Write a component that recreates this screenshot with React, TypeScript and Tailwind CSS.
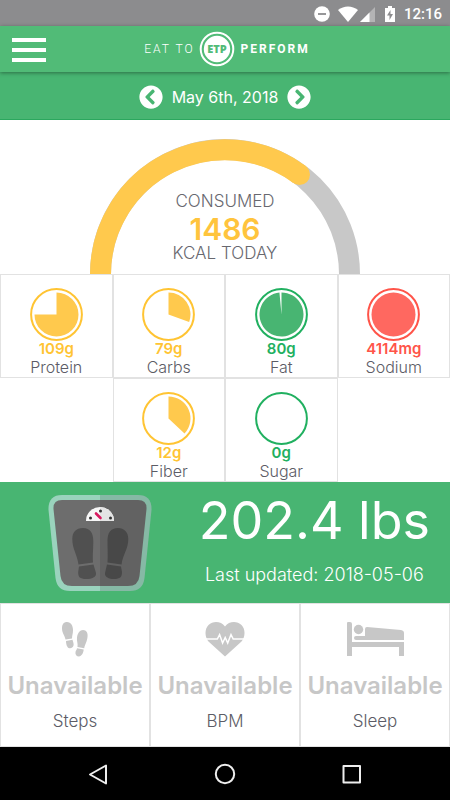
import React from "react"
import { FaChevronCircleLeft, FaChevronCircleRight } from "react-icons/fa"

interface Nutrient {
	name: string
	amount: string
	ratio: number
	fill: string
	textClass: string
}

const YELLOW = "#ffc94d"
const GREEN = "#48b572"
const RED = "#ff6860"

const topNutrients: Nutrient[] = [
	{ name: "Protein", amount: "109g", ratio: 0.75, fill: YELLOW, textClass: "text-[#ffc433]" },
	{ name: "Carbs", amount: "79g", ratio: 0.306, fill: YELLOW, textClass: "text-[#ffc433]" },
	{ name: "Fat", amount: "80g", ratio: 0.985, fill: GREEN, textClass: "text-[#21b060]" },
	{ name: "Sodium", amount: "4114mg", ratio: 1, fill: RED, textClass: "text-[#ff5449]" },
]

const bottomNutrients: Nutrient[] = [
	{ name: "Fiber", amount: "12g", ratio: 0.37, fill: YELLOW, textClass: "text-[#ffc433]" },
	{ name: "Sugar", amount: "0g", ratio: 0, fill: GREEN, textClass: "text-[#21b060]" },
]

const Pie = ({ ratio, fill }: { ratio: number; fill: string }) => {
	const angle = ratio * Math.PI * 2
	const x = 27 + 22 * Math.sin(angle)
	const y = 27 - 22 * Math.cos(angle)

	return (
		<svg className="h-[53px] w-[53px]" viewBox="0.5 0.5 53 53" aria-hidden="true">
			<circle cx="27" cy="27" r="25.4" fill="none" stroke="currentColor" strokeWidth="2" />
			{ratio >= 1 && <circle cx="27" cy="27" r="22" fill={fill} />}
			{ratio > 0 && ratio < 1 && <path d={`M27 27V5A22 22 0 ${ratio > 0.5 ? 1 : 0} 1 ${x} ${y}Z`} fill={fill} />}
		</svg>
	)
}

const NutrientCell = ({ nutrient }: { nutrient: Nutrient }) => (
	<div className="w-1/4 border border-[#e2e2e2] bg-white pt-[13px] flex flex-col items-center">
		<div className={`flex flex-col items-center ${nutrient.textClass}`}>
			<Pie ratio={nutrient.ratio} fill={nutrient.fill} />
			<span className="text-[15px] leading-4 font-semibold">{nutrient.amount}</span>
		</div>
		<span className="text-[16px] leading-5 font-light text-[#5c5c66]">{nutrient.name}</span>
	</div>
)

const StatusBar = () => (
	<div className="h-[26px] bg-[#8c8c8e] pt-0.5 pr-2 text-white flex items-center justify-end gap-2">
		<svg className="h-4 w-4" viewBox="0 0 16 16" aria-hidden="true">
			<circle cx="8" cy="8" r="7.8" fill="currentColor" />
			<path d="M4 8h8" stroke="#8c8c8e" strokeWidth="1.8" />
		</svg>
		<svg className="h-4 w-[38px]" viewBox="0 0 38 16" aria-hidden="true">
			<path d="M0 4C6-.7 14-.7 20 4L10 16Z" fill="currentColor" />
			<path d="M37 1V16H22Z" fill="currentColor" opacity="0.35" />
			<path d="M31.500 6.500V16H22Z" fill="currentColor" />
		</svg>
		<svg className="h-4 w-3" viewBox="0 0 12 16" aria-hidden="true">
			<path d="M4 0h4v2h3v14H1V2h3Z" fill="currentColor" />
			<path d="M6.500 4L3 9.500h2.500V14L9 8H6.500Z" fill="#8c8c8e" />
		</svg>
		<span className="font-[Roboto,sans-serif] text-[15px] leading-5 font-medium">12:16</span>
	</div>
)

const Header = () => (
	<header className="relative h-[46px] bg-[#51bb77] shadow-[0_1px_4px_rgba(0,0,0,0.4)] flex items-center justify-center">
		<button aria-label="Menu" className="absolute left-3 top-3 flex flex-col gap-1.5">
			<span className="block h-1 w-[34px] bg-white" />
			<span className="block h-1 w-[34px] bg-white" />
			<span className="block h-1 w-[34px] bg-white" />
		</button>
		<div className="flex items-center gap-1 pl-1 text-white font-[Roboto,sans-serif] text-[12px] tracking-[2px]">
			<span className="font-light">EAT TO</span>
			<svg className="h-9 w-9" viewBox="0 0 36 36">
				<circle cx="18" cy="18" r="16.300" fill="none" stroke="#fff" strokeWidth="2" />
				<circle cx="18" cy="18" r="13.200" fill="#fff" />
				<text x="18" y="22" textAnchor="middle" fontFamily="Open Sans, sans-serif" fontSize="11" fontWeight="800" letterSpacing="0" fill="#51bb77">
					ETP
				</text>
			</svg>
			<span className="pl-0.5 font-bold">PERFORM</span>
		</div>
	</header>
)

const DateBar = () => (
	<div className="h-12 border-b border-[#2ba75e] bg-[#48b572] pt-[3px] text-white flex items-center justify-center gap-[9px]">
		<button aria-label="Previous day">
			<FaChevronCircleLeft className="h-6 w-6" />
		</button>
		<span className="text-[16px] leading-6">May 6th, 2018</span>
		<button aria-label="Next day">
			<FaChevronCircleRight className="h-6 w-6" />
		</button>
	</div>
)

const CalorieGauge = () => (
	<section className="grid justify-items-center pt-[18px]">
		<svg className="col-start-1 row-start-1 h-[136px] w-[270px]" viewBox="0 0 270 136" aria-hidden="true">
			<path d="M10.500 136A124.500 124.500 0 0 1 259.500 136" fill="none" stroke="#c8c8c8" strokeWidth="21" />
			<path d="M10.500 136A124.500 124.500 0 0 1 209.500 36.500" fill="none" stroke={YELLOW} strokeWidth="21" />
			<circle cx="209.500" cy="36.500" r="10.500" fill={YELLOW} />
		</svg>
		<div className="col-start-1 row-start-1 pt-[51px] text-center text-[#68686f]">
			<p className="text-[17px] leading-6 font-light">CONSUMED</p>
			<p className="text-[30px] leading-8 font-semibold text-[#ffc43d]">1486</p>
			<p className="text-[17px] leading-4 font-light">KCAL TODAY</p>
		</div>
	</section>
)

const ScaleIcon = () => (
	<svg className="h-24 w-[104px]" viewBox="0 0 104 96" aria-hidden="true">
		<path d="M14 0H52V96H22Q9 96 7.500 83L0.500 15Q0 0 14 0Z" fill="#9ad3bd" />
		<path d="M90 0H52V96H82Q95 96 96.500 83L103.500 15Q104 0 90 0Z" fill="#86b9a5" />
		<path d="M14 5H52V91H24Q13.500 91 12.500 81L5.500 14Q5 5 14 5Z" fill="#6d6d6d" />
		<path d="M90 5H52V91H80Q90.500 91 91.500 81L98.500 14Q99 5 90 5Z" fill="#626262" />
		<path d="M38 26A14 14 0 0 1 66 26Z" fill="#f7f7f7" />
		<path d="M52 12A14 14 0 0 1 66 26H52Z" fill="#e4e4e4" />
		<circle cx="42.500" cy="23" r="1.500" fill="#333" />
		<circle cx="52.500" cy="16" r="1.500" fill="#333" />
		<circle cx="62.500" cy="23" r="1.500" fill="#333" />
		<path d="M48 18.500L52.500 23" stroke="#d81b60" strokeWidth="2.600" strokeLinecap="round" />
		<path d="M30.500 69.500C29 59 24.300 54 24.300 44C24.300 37 28 33 35 33C42 33 45.300 38 45.300 46C45.300 55 44.500 60 45 67.500Z" fill="#505050" />
		<path d="M31 71.500L45.500 69.500L48 78C48.500 82 44 84 38 84C32 84 30 82 30.200 77Z" fill="#505050" />
		<path d="M73.500 69.500C75 59 80.300 54 80.300 44C80.300 37 76 33 70 33C62.500 33 59.500 38 59.500 46C59.500 55 60 60 59.500 67.500Z" fill="#484848" />
		<path d="M73 71.500L59 69.500L57 78C56.500 82 61 84 66 84C72 84 74 82 74 77Z" fill="#484848" />
	</svg>
)

const StepsIcon = () => (
	<svg className="h-[35px] w-[26px]" viewBox="0 0 26 35" fill="currentColor" aria-hidden="true">
		<path d="M3.500 17.500C2.500 13 0 11 0 6.500C0 2 2 0 5 0C9 0 11 4 11 8.500C11 12 10 13 10 16.500Z" />
		<path d="M4 19L10.500 17.800C11 20 12 22 11.500 23.500C11 25.500 9 26.500 7.500 26.200C5 26 4 22 4 19Z" />
		<path d="M15.500 25C16 21 14.500 19 15 15.500C15.500 11 18 8 21 8C24.500 8 26 11 25.500 15C25 20 23 22 22.200 26.300Z" />
		<path d="M15 26.200L21.700 27.600C21.500 31 19.500 34.500 17 34.500C14.500 34.500 13 32.500 13.500 30C13.800 28.500 14.700 28 15 26.200Z" />
	</svg>
)

const HeartIcon = () => (
	<svg className="h-[35px] w-10" viewBox="0 0 40 35" aria-hidden="true">
		<path d="M20 34.500L3.500 19.500C-.5 14.500-.5 7 3.500 3C8-1.300 16-1 20 4.500C24-1 32-1.300 36.500 3C40.500 7 40.500 14.500 36.500 19.500Z" fill="currentColor" />
		<path d="M0 17H12.300L14.600 12.600L17.600 21L20.200 15.500L22.700 21L26 12.600L28.200 17H40" fill="none" stroke="#fff" strokeWidth="1.500" />
	</svg>
)

const BedIcon = () => (
	<svg className="h-[35px] w-[57px]" viewBox="0 0 57 35" fill="currentColor" aria-hidden="true">
		<path d="M0 1Q0 0 1 0H3Q5 0 5 2V20H57V34H52V25H5V34H0Z" />
		<circle cx="11.500" cy="7.500" r="4.700" />
		<path d="M9 14H18V7Q18 5 20 5L54 8Q57 8.500 57 11V18H9Q7 18 7 16Q7 14 9 14Z" />
	</svg>
)

const StatCell = ({ label, children }: { label: string; children: React.ReactNode }) => (
	<div className="flex-1 h-36 border border-[#e2e2e2] bg-white pt-[18px] flex flex-col items-center text-[#c7c7c7]">
		{children}
		<p className="mt-[13px] text-[24px] leading-8 font-semibold">Unavailable</p>
		<p className="mt-[3px] text-[17px] leading-8 font-light text-[#5c5c66]">{label}</p>
	</div>
)

const NavBar = () => (
	<nav className="grow bg-black px-[35px] text-[#eee] flex justify-between items-center">
		<button aria-label="Back" className="flex h-12 w-32 items-center justify-center">
			<svg className="h-6 w-6" viewBox="0 0 24 24" fill="none" stroke="currentColor" strokeWidth="2" strokeLinejoin="round">
				<path d="M20 3.500V21.500L4 12.500Z" />
			</svg>
		</button>
		<button aria-label="Home" className="flex h-12 w-32 items-center justify-center">
			<svg className="h-6 w-6" viewBox="0 0 24 24" fill="none" stroke="currentColor" strokeWidth="2">
				<circle cx="12" cy="12" r="9.200" />
			</svg>
		</button>
		<button aria-label="Recent apps" className="flex h-12 w-32 items-center justify-center">
			<svg className="h-6 w-6" viewBox="0 0 24 24" fill="none" stroke="currentColor" strokeWidth="2" strokeLinejoin="round">
				<rect x="3.500" y="4" width="16.500" height="16.500" />
			</svg>
		</button>
	</nav>
)

export default function App() {
	return (
		<div className="min-h-screen bg-white font-[Inter,sans-serif] flex flex-col">
			<StatusBar />
			<Header />
			<DateBar />
			<main>
				<CalorieGauge />
				<section>
					<div className="flex">
						{topNutrients.map((n) => (
							<NutrientCell key={n.name} nutrient={n} />
						))}
					</div>
					<div className="flex justify-center">
						{bottomNutrients.map((n) => (
							<NutrientCell key={n.name} nutrient={n} />
						))}
					</div>
				</section>
				<section className="h-[121px] bg-[#48b572] pl-12 pr-5 text-white flex items-center justify-between">
					<ScaleIcon />
					<div className="mb-3 text-center">
						<p className="text-[52px] leading-[76px]">202.4 lbs</p>
						<p className="text-[18px] leading-8 font-light">Last updated: 2018-05-06</p>
					</div>
				</section>
				<section className="flex">
					<StatCell label="Steps">
						<StepsIcon />
					</StatCell>
					<StatCell label="BPM">
						<HeartIcon />
					</StatCell>
					<StatCell label="Sleep">
						<BedIcon />
					</StatCell>
				</section>
			</main>
			<NavBar />
		</div>
	)
}
